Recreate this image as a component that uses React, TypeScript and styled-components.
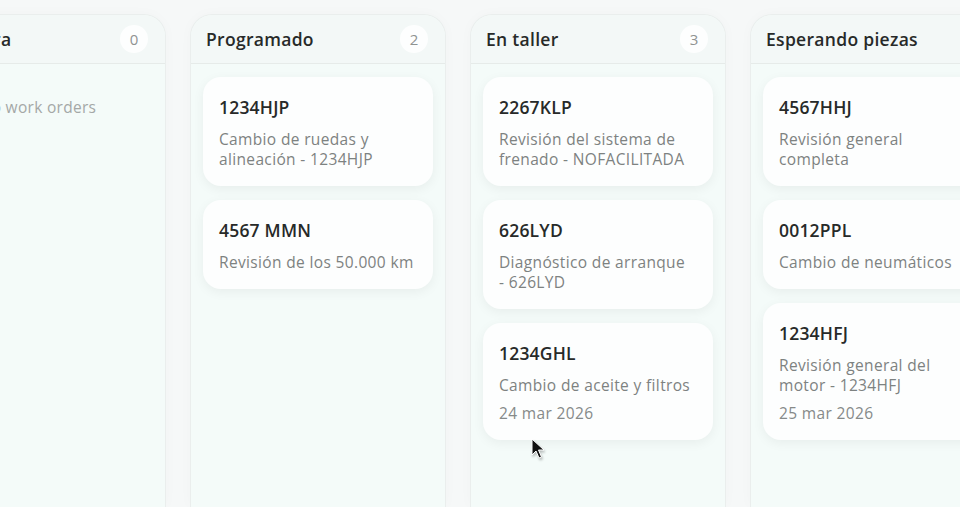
import React from "react";
import styled, {createGlobalStyle} from "styled-components";

const GlobalStyle = createGlobalStyle`
    html, body {
        margin: 0;
        padding: 0;
        background: #f6f8f8;
        overflow: hidden;
    }
    body {
        font-family: "Open Sans", "Noto Sans", sans-serif;
        -webkit-font-smoothing: antialiased;
    }
    * {
        box-sizing: border-box;
    }
`;

interface Order {
    plate: string;
    description: string;
    date?: string;
}

interface ColumnData {
    title: string;
    orders: Order[];
}

const columns: ColumnData[] = [
    {title: "En espera", orders: []},
    {
        title: "Programado",
        orders: [
            {plate: "1234HJP", description: "Cambio de ruedas y alineación - 1234HJP"},
            {plate: "4567 MMN", description: "Revisión de los 50.000 km"},
        ],
    },
    {
        title: "En taller",
        orders: [
            {plate: "2267KLP", description: "Revisión del sistema de frenado - NOFACILITADA"},
            {plate: "626LYD", description: "Diagnóstico de arranque -\u2060\u00a0\u2060626LYD"},
            {plate: "1234GHL", description: "Cambio de aceite y filtros", date: "24 mar 2026"},
        ],
    },
    {
        title: "Esperando piezas",
        orders: [
            {plate: "4567HHJ", description: "Revisión general completa"},
            {plate: "0012PPL", description: "Cambio de neumáticos"},
            {plate: "1234HFJ", description: "Revisión general del motor - 1234HFJ", date: "25 mar 2026"},
        ],
    },
];

const Board = styled.div`
    display: flex;
    gap: 24px;
    margin-left: -90px;
    padding-top: 14px;
    height: 507px;
`;

const Column = styled.section`
    flex: 0 0 256px;
    width: 256px;
    background: #f4fbf9;
    border: 1px solid #eaeeed;
    border-bottom: none;
    border-radius: 22px 22px 0 0;
    display: flex;
    flex-direction: column;
    box-shadow: 0 0 14px rgba(0, 0, 0, 0.025);
`;

const ColumnHeader = styled.header`
    height: 49px;
    padding: 0 17px 0 15px;
    display: flex;
    align-items: center;
    justify-content: space-between;
    background: #f3f8f7;
    border-bottom: 1px solid #e6ebe9;
    border-radius: 22px 22px 0 0;
`;

const ColumnTitle = styled.h2`
    margin: 0;
    font-size: 17.5px;
    font-weight: 600;
    letter-spacing: 0.3px;
    color: #272a29;
    white-space: nowrap;
`;

const CountBadge = styled.span`
    width: 28px;
    height: 28px;
    border-radius: 50%;
    background: #fdfefe;
    color: #8f9392;
    font-size: 15px;
    display: flex;
    align-items: center;
    justify-content: center;
`;

const ColumnBody = styled.div`
    padding: 13px 12px;
    display: flex;
    flex-direction: column;
    gap: 14px;
`;

const Empty = styled.p`
    margin: 20px 0 0;
    text-align: center;
    font-size: 15.5px;
    line-height: 20px;
    letter-spacing: 0.3px;
    color: #a4a8a7;
`;

const Card = styled.article`
    background: #fdfefe;
    border-radius: 18px;
    padding: 18px 16px 17px;
    box-shadow: 0 3px 12px rgba(0, 0, 0, 0.055);
    display: flex;
    flex-direction: column;
`;

const Plate = styled.h3`
    margin: 0;
    font-size: 17.5px;
    line-height: 24px;
    font-weight: 600;
    letter-spacing: 0.2px;
    color: #272a29;
`;

const Description = styled.p`
    margin: 10px 0 0;
    font-size: 15.5px;
    line-height: 20px;
    letter-spacing: 0.35px;
    color: #7d8281;
`;

const DateText = styled.span`
    margin-top: 8px;
    font-size: 15.5px;
    line-height: 20px;
    letter-spacing: 0.35px;
    color: #868a89;
`;

const Cursor = styled.svg`
    position: fixed;
    left: 531px;
    top: 438px;
    filter: drop-shadow(1px 2px 1px rgba(0, 0, 0, 0.25));
`;

export default function App(): React.JSX.Element {
    return (
        <>
            <GlobalStyle/>
            <Board>
                {columns.map((col) => (
                    <Column key={col.title}>
                        <ColumnHeader>
                            <ColumnTitle>{col.title}</ColumnTitle>
                            <CountBadge>{col.orders.length}</CountBadge>
                        </ColumnHeader>
                        <ColumnBody>
                            {col.orders.length === 0 && <Empty>No work orders</Empty>}
                            {col.orders.map((o) => (
                                <Card key={o.plate}>
                                    <Plate>{o.plate}</Plate>
                                    <Description>{o.description}</Description>
                                    {o.date && <DateText>{o.date}</DateText>}
                                </Card>
                            ))}
                        </ColumnBody>
                    </Column>
                ))}
            </Board>
            <Cursor width="14" height="22" viewBox="0 0 14 22">
                <path d="M1 1 L1 17 L5 13 L8 20 L10.5 19 L7.5 12 L13 12 Z" fill="#111" stroke="#fff" strokeWidth="1"/>
            </Cursor>
        </>
    );
}
